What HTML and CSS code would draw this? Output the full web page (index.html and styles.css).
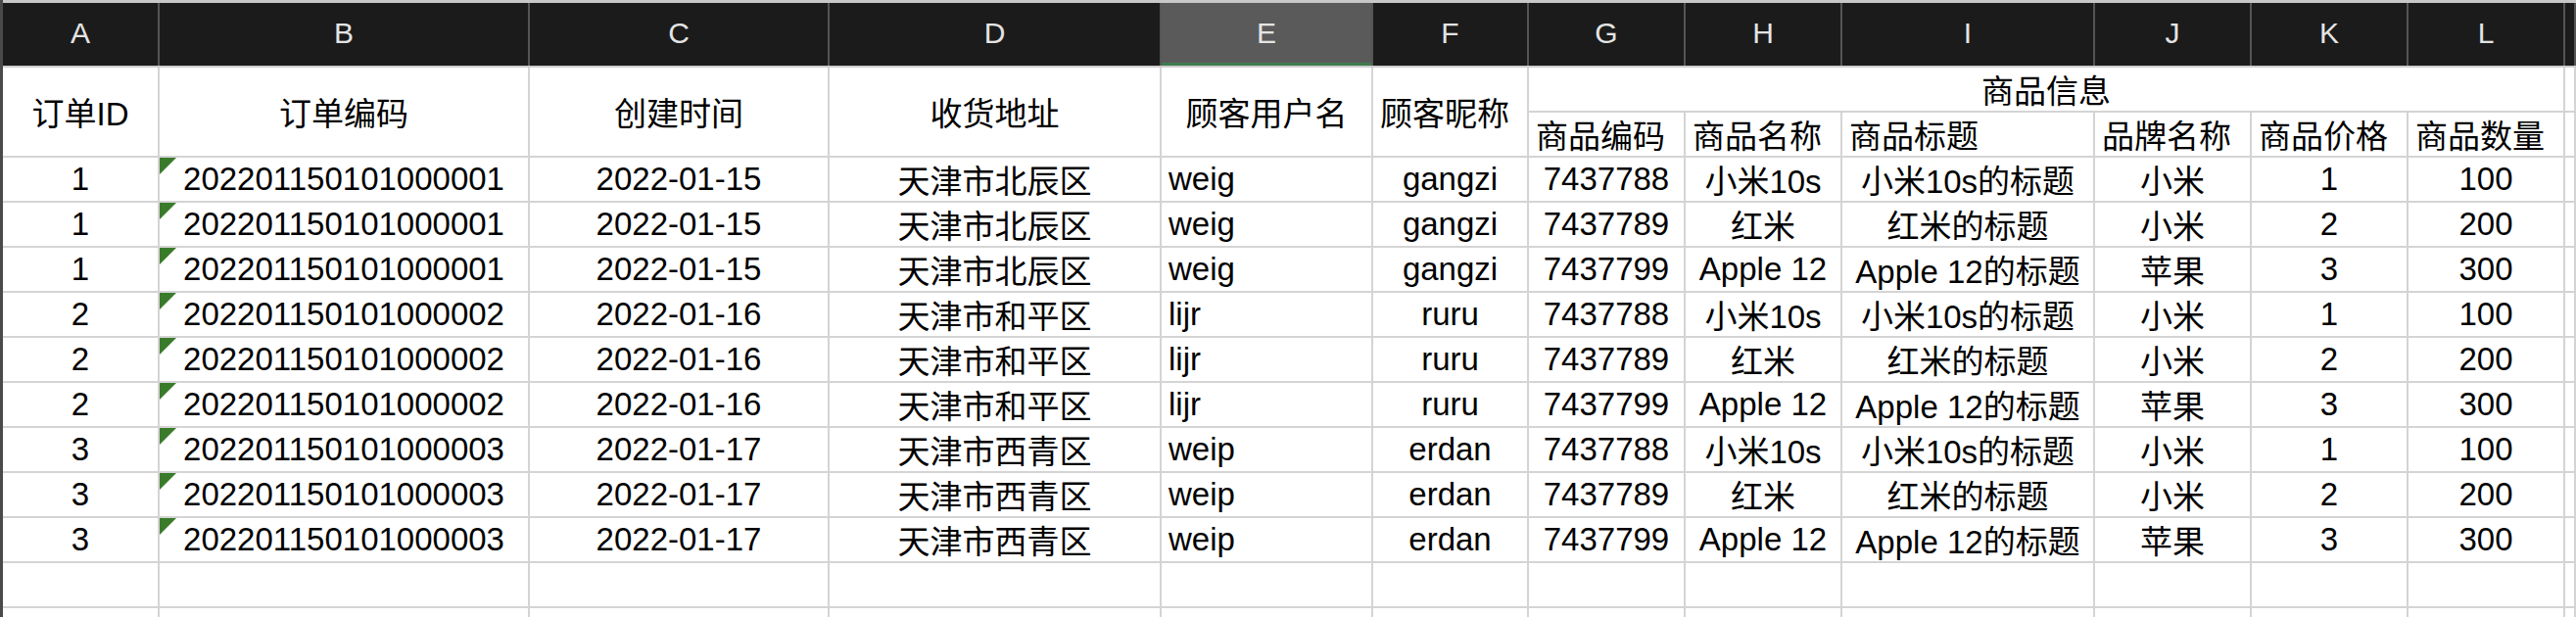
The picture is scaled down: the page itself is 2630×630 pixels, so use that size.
FILE: index.html
```html
<!DOCTYPE html>
<html lang="zh-CN">
<head>
<meta charset="utf-8">
<title>订单表</title>
<link rel="stylesheet" href="styles.css">
</head>
<body>
<div class="sheet">
  <div class="colhead">
    <div class="ch">A</div>
    <div class="ch">B</div>
    <div class="ch">C</div>
    <div class="ch">D</div>
    <div class="ch sel">E</div>
    <div class="ch">F</div>
    <div class="ch">G</div>
    <div class="ch">H</div>
    <div class="ch">I</div>
    <div class="ch">J</div>
    <div class="ch">K</div>
    <div class="ch">L</div>
    <div class="ch"></div>
  </div>
  <div class="grid">
    <div class="c span2">订单ID</div>
    <div class="c span2">订单编码</div>
    <div class="c span2">创建时间</div>
    <div class="c span2">收货地址</div>
    <div class="c span2">顾客用户名</div>
    <div class="c span2 left">顾客昵称</div>
    <div class="c group">商品信息</div>
    <div class="c"></div>
    <div class="c left">商品编码</div>
    <div class="c left">商品名称</div>
    <div class="c left">商品标题</div>
    <div class="c left">品牌名称</div>
    <div class="c left">商品价格</div>
    <div class="c left">商品数量</div>
    <div class="c"></div>

    <div class="c">1</div><div class="c txt">202201150101000001</div><div class="c">2022-01-15</div><div class="c">天津市北辰区</div><div class="c left">weig</div><div class="c">gangzi</div><div class="c">7437788</div><div class="c">小米10s</div><div class="c">小米10s的标题</div><div class="c">小米</div><div class="c">1</div><div class="c">100</div><div class="c"></div>
    <div class="c">1</div><div class="c txt">202201150101000001</div><div class="c">2022-01-15</div><div class="c">天津市北辰区</div><div class="c left">weig</div><div class="c">gangzi</div><div class="c">7437789</div><div class="c">红米</div><div class="c">红米的标题</div><div class="c">小米</div><div class="c">2</div><div class="c">200</div><div class="c"></div>
    <div class="c">1</div><div class="c txt">202201150101000001</div><div class="c">2022-01-15</div><div class="c">天津市北辰区</div><div class="c left">weig</div><div class="c">gangzi</div><div class="c">7437799</div><div class="c">Apple 12</div><div class="c">Apple 12的标题</div><div class="c">苹果</div><div class="c">3</div><div class="c">300</div><div class="c"></div>
    <div class="c">2</div><div class="c txt">202201150101000002</div><div class="c">2022-01-16</div><div class="c">天津市和平区</div><div class="c left">lijr</div><div class="c">ruru</div><div class="c">7437788</div><div class="c">小米10s</div><div class="c">小米10s的标题</div><div class="c">小米</div><div class="c">1</div><div class="c">100</div><div class="c"></div>
    <div class="c">2</div><div class="c txt">202201150101000002</div><div class="c">2022-01-16</div><div class="c">天津市和平区</div><div class="c left">lijr</div><div class="c">ruru</div><div class="c">7437789</div><div class="c">红米</div><div class="c">红米的标题</div><div class="c">小米</div><div class="c">2</div><div class="c">200</div><div class="c"></div>
    <div class="c">2</div><div class="c txt">202201150101000002</div><div class="c">2022-01-16</div><div class="c">天津市和平区</div><div class="c left">lijr</div><div class="c">ruru</div><div class="c">7437799</div><div class="c">Apple 12</div><div class="c">Apple 12的标题</div><div class="c">苹果</div><div class="c">3</div><div class="c">300</div><div class="c"></div>
    <div class="c">3</div><div class="c txt">202201150101000003</div><div class="c">2022-01-17</div><div class="c">天津市西青区</div><div class="c left">weip</div><div class="c">erdan</div><div class="c">7437788</div><div class="c">小米10s</div><div class="c">小米10s的标题</div><div class="c">小米</div><div class="c">1</div><div class="c">100</div><div class="c"></div>
    <div class="c">3</div><div class="c txt">202201150101000003</div><div class="c">2022-01-17</div><div class="c">天津市西青区</div><div class="c left">weip</div><div class="c">erdan</div><div class="c">7437789</div><div class="c">红米</div><div class="c">红米的标题</div><div class="c">小米</div><div class="c">2</div><div class="c">200</div><div class="c"></div>
    <div class="c">3</div><div class="c txt">202201150101000003</div><div class="c">2022-01-17</div><div class="c">天津市西青区</div><div class="c left">weip</div><div class="c">erdan</div><div class="c">7437799</div><div class="c">Apple 12</div><div class="c">Apple 12的标题</div><div class="c">苹果</div><div class="c">3</div><div class="c">300</div><div class="c"></div>

    <div class="c"></div><div class="c"></div><div class="c"></div><div class="c"></div><div class="c"></div><div class="c"></div><div class="c"></div><div class="c"></div><div class="c"></div><div class="c"></div><div class="c"></div><div class="c"></div><div class="c"></div>
    <div class="c"></div><div class="c"></div><div class="c"></div><div class="c"></div><div class="c"></div><div class="c"></div><div class="c"></div><div class="c"></div><div class="c"></div><div class="c"></div><div class="c"></div><div class="c"></div><div class="c"></div>
  </div>
</div>
</body>
</html>
```

FILE: styles.css
```css
html, body {
  margin: 0;
  padding: 0;
  background: #ffffff;
  overflow: hidden;
}

.sheet {
  width: 2630px;
  height: 630px;
  overflow: hidden;
  box-sizing: border-box;
  border-left: 3px solid #4a4a4a;
  font-family: "Liberation Sans", "Noto Sans CJK SC", sans-serif;
  color: #000;
}

.colhead,
.grid {
  display: grid;
  grid-template-columns: 160px 378px 306px 339px 216px 159px 160px 160px 258px 160px 160px 160px 1fr;
}

.colhead {
  height: 69px;
  box-sizing: border-box;
  border-top: 3px solid #c8c8c8;
  border-bottom: 2px solid #cdcdcd;
  background: #1b1b1b;
}

.ch {
  display: flex;
  align-items: center;
  justify-content: center;
  box-sizing: border-box;
  border-right: 2px solid #555555;
  color: #e4e4e4;
  font-size: 30px;
  padding-bottom: 2px;
}

.ch.sel {
  background: #5a5a5a;
  box-shadow: inset 0 -3px 0 #3f7c4e;
}

.grid {
  grid-auto-rows: 46px;
}

.c {
  position: relative;
  display: flex;
  align-items: center;
  justify-content: center;
  box-sizing: border-box;
  border-right: 2px solid #d4d4d4;
  border-bottom: 2px solid #d4d4d4;
  font-size: 33px;
  white-space: nowrap;
  overflow: hidden;
}

.c.span2 {
  grid-row: span 2;
}

.c.group {
  grid-column: span 6;
}

.c.left {
  justify-content: flex-start;
  padding-left: 7px;
}

.c.txt::before {
  content: "";
  position: absolute;
  top: 0;
  left: 0;
  width: 0;
  height: 0;
  border-top: 17px solid #3a7b2b;
  border-right: 17px solid transparent;
}
```
